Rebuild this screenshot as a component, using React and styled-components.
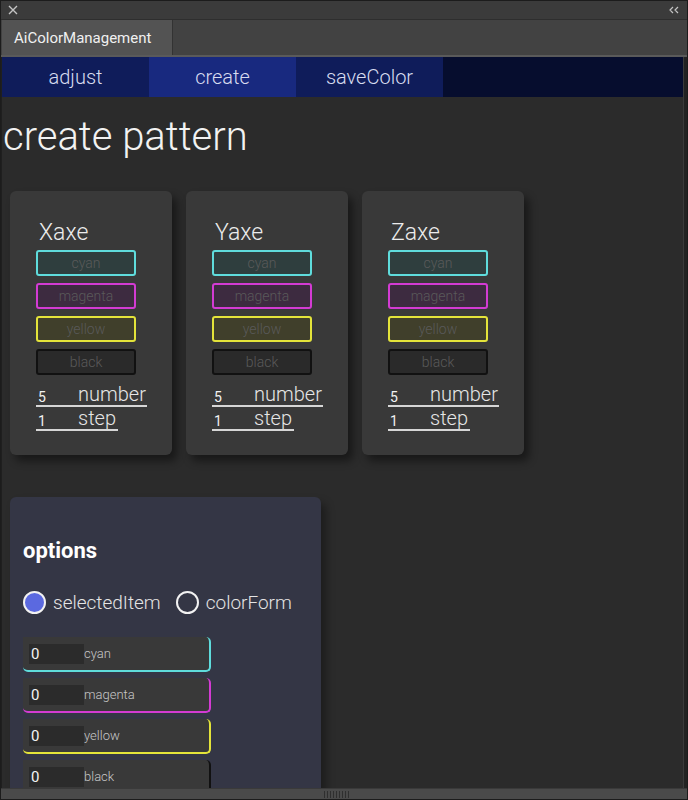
import React from "react";
import styled, { createGlobalStyle } from "styled-components";

const GlobalStyle = createGlobalStyle`
  html, body {
    margin: 0;
    padding: 0;
    background: #232323;
  }
  * { box-sizing: border-box; }
`;

const FONT = `"Helvetica Neue", Roboto, "Liberation Sans", Arial, sans-serif`;

const Frame = styled.div`
  width: 688px;
  height: 800px;
  display: flex;
  flex-direction: column;
  background: #2b2b2b;
  border: 1px solid #1c1c1c;
  overflow: hidden;
  font-family: ${FONT};
`;

const TitleBar = styled.div`
  height: 18px;
  flex: none;
  display: flex;
  align-items: center;
  justify-content: space-between;
  padding: 0 8px 0 7px;
  background: #3b3b3b;
  color: #bdbdbd;
  font-size: 12px;
`;

const TabRow = styled.div`
  height: 38px;
  flex: none;
  display: flex;
  background: #424242;
  border-top: 1px solid #2e2e2e;
  border-bottom: 2px solid #5a5a5a;
  padding-left: 1px;
`;

const Tab = styled.div`
  width: 171px;
  display: flex;
  align-items: center;
  padding-left: 12px;
  background: #535353;
  border-right: 1px solid #333;
  color: #f0f0f0;
  font-size: 15px;
`;

const Body = styled.div`
  flex: 1;
  display: flex;
  min-height: 0;
`;

const Main = styled.div`
  flex: 1;
  display: flex;
  flex-direction: column;
  min-width: 0;
  border-left: 1px solid #1f1f1f;
`;

const Rail = styled.div`
  width: 4px;
  background: #222;
  border-left: 1px solid #3a3a3a;
`;

const Nav = styled.div`
  height: 40px;
  flex: none;
  display: flex;
  background: #060d2e;
`;

const NavItem = styled.div`
  width: 147px;
  display: flex;
  align-items: center;
  justify-content: center;
  background: ${(p) => (p.$active ? "#18297f" : "#0f1c5a")};
  color: #d8dcf0;
  font-size: 20px;
  font-weight: 300;
`;

const Content = styled.div`
  flex: 1;
  min-height: 0;
  overflow: hidden;
  padding-top: 14px;
`;

const Heading = styled.h1`
  margin: 0 0 28px 0;
  padding-left: 1px;
  font-size: 40px;
  line-height: 52px;
  font-weight: 300;
  color: #f2f2f2;
`;

const Cards = styled.div`
  display: flex;
  gap: 14px;
  padding-left: 8px;
`;

const Card = styled.div`
  width: 162px;
  height: 264px;
  background: #393939;
  border-radius: 6px;
  box-shadow: 5px 6px 8px rgba(0, 0, 0, 0.45);
  padding: 28px 0 0 26px;
  display: flex;
  flex-direction: column;
`;

const AxisTitle = styled.div`
  font-size: 23px;
  font-weight: 300;
  line-height: 28px;
  color: #ececec;
  padding-left: 3px;
  margin-bottom: 3px;
`;

const swatch = {
  cyan: { border: "#5fdcdc", bg: "#2f3e3e" },
  magenta: { border: "#d33bd3", bg: "#3d2b40" },
  yellow: { border: "#e3e33a", bg: "#403f2b" },
  black: { border: "#111111", bg: "#2a2a2a" },
};

const ColorBox = styled.div`
  width: 100px;
  height: 26px;
  margin-bottom: 7px;
  border: 2px solid ${(p) => swatch[p.$c].border};
  background: ${(p) => swatch[p.$c].bg};
  border-radius: 3px;
  display: flex;
  align-items: center;
  justify-content: center;
  color: #5a5a5a;
  font-size: 14px;
  font-weight: 300;
`;

const ValueRow = styled.div`
  display: flex;
  align-items: flex-end;
  width: ${(p) => p.$w}px;
  border-bottom: 2px solid #d6d6d6;
  height: 23px;
  margin-top: ${(p) => p.$mt}px;
`;

const ValueNum = styled.span`
  width: 42px;
  padding-left: 2px;
  font-size: 14px;
  line-height: 16px;
  color: #f2f2f2;
`;

const ValueLabel = styled.span`
  font-size: 20px;
  font-weight: 300;
  line-height: 22px;
  color: #e6e6e6;
`;

const Options = styled.div`
  width: 311px;
  margin: 42px 0 0 8px;
  background: #343645;
  border-radius: 6px;
  padding: 40px 0 30px 13px;
  box-shadow: 5px 6px 8px rgba(0, 0, 0, 0.35);
`;

const OptionsTitle = styled.h2`
  margin: 0 0 26px 0;
  font-size: 22px;
  font-weight: 700;
  color: #ffffff;
  line-height: 28px;
`;

const RadioGroup = styled.div`
  display: flex;
  align-items: center;
  gap: 15px;
  margin-bottom: 23px;
`;

const RadioLabel = styled.label`
  display: flex;
  align-items: center;
  gap: 7px;
  font-size: 19px;
  font-weight: 300;
  color: #e4e4e4;
`;

const RadioDot = styled.span`
  width: 23px;
  height: 23px;
  border-radius: 50%;
  border: 2px solid #f2f2f2;
  background: ${(p) => (p.$on ? "#5b69e0" : "transparent")};
`;

const Row = styled.div`
  width: 188px;
  height: 35px;
  margin-bottom: 6px;
  background: #393939;
  border-right: 2px solid ${(p) => swatch[p.$c].border};
  border-bottom: 2px solid ${(p) => swatch[p.$c].border};
  border-radius: 0 5px 5px 5px;
  display: flex;
  align-items: center;
  padding-left: 6px;
`;

const RowInput = styled.div`
  width: 55px;
  height: 20px;
  background: #2b2b2b;
  color: #f4f4f4;
  font-size: 15px;
  line-height: 20px;
  padding-left: 2px;
`;

const RowLabel = styled.span`
  font-size: 13px;
  font-weight: 300;
  color: #c8c8c8;
`;

const HScroll = styled.div`
  height: 11px;
  flex: none;
  background: #4a4a4a;
  border-top: 1px solid #3a3a3a;
  display: flex;
  align-items: center;
  justify-content: center;
`;

const Grip = styled.div`
  width: 26px;
  height: 7px;
  background: repeating-linear-gradient(
    90deg,
    #2f2f2f 0 1px,
    transparent 1px 3px
  );
  margin-left: -14px;
`;

const colors = ["cyan", "magenta", "yellow", "black"];

function AxisCard({ name }) {
  return (
    <Card>
      <AxisTitle>{name}</AxisTitle>
      {colors.map((c) => (
        <ColorBox key={c} $c={c}>
          {c}
        </ColorBox>
      ))}
      <ValueRow $w={111} $mt={2}>
        <ValueNum>5</ValueNum>
        <ValueLabel>number</ValueLabel>
      </ValueRow>
      <ValueRow $w={82} $mt={1}>
        <ValueNum>1</ValueNum>
        <ValueLabel>step</ValueLabel>
      </ValueRow>
    </Card>
  );
}

export default function App() {
  return (
    <>
      <GlobalStyle />
      <Frame>
        <TitleBar>
          <svg width="10" height="10" viewBox="0 0 10 10">
            <path d="M1 1L9 9M9 1L1 9" stroke="#c4c4c4" strokeWidth="1.4" />
          </svg>
          <svg width="10" height="8" viewBox="0 0 10 8">
            <path d="M4 1L1 4L4 7M9 1L6 4L9 7" stroke="#c4c4c4" strokeWidth="1.2" fill="none" />
          </svg>
        </TitleBar>
        <TabRow>
          <Tab>AiColorManagement</Tab>
        </TabRow>
        <Body>
          <Main>
            <Nav>
              <NavItem>adjust</NavItem>
              <NavItem $active>create</NavItem>
              <NavItem>saveColor</NavItem>
            </Nav>
            <Content>
              <Heading>create pattern</Heading>
              <Cards>
                <AxisCard name="Xaxe" />
                <AxisCard name="Yaxe" />
                <AxisCard name="Zaxe" />
              </Cards>
              <Options>
                <OptionsTitle>options</OptionsTitle>
                <RadioGroup>
                  <RadioLabel>
                    <RadioDot $on />
                    selectedItem
                  </RadioLabel>
                  <RadioLabel>
                    <RadioDot />
                    colorForm
                  </RadioLabel>
                </RadioGroup>
                {colors.map((c) => (
                  <Row key={c} $c={c}>
                    <RowInput>0</RowInput>
                    <RowLabel>{c}</RowLabel>
                  </Row>
                ))}
              </Options>
            </Content>
          </Main>
          <Rail />
        </Body>
        <HScroll>
          <Grip />
        </HScroll>
      </Frame>
    </>
  );
}
